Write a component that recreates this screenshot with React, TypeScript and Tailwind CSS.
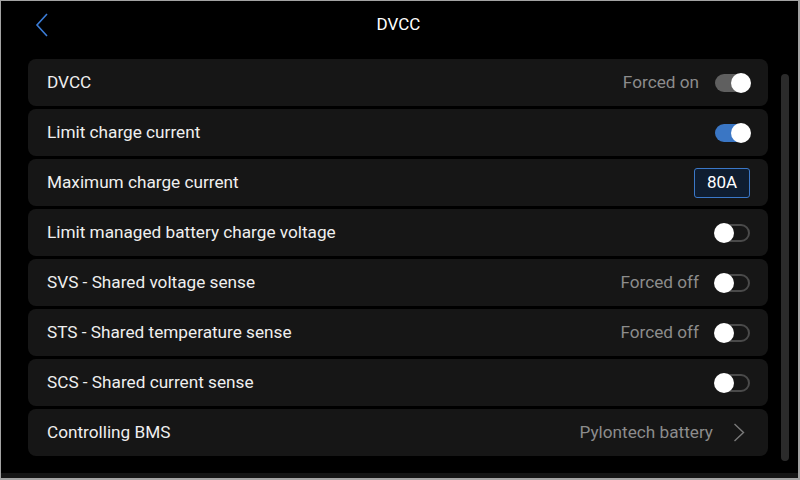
import React from 'react';

type Row = {
  label: string;
  note?: string;
  kind: 'toggle' | 'value' | 'link';
  state?: 'on' | 'off' | 'forced';
  value?: string;
};

const rows: Row[] = [
  { label: 'DVCC', note: 'Forced on', kind: 'toggle', state: 'forced' },
  { label: 'Limit charge current', kind: 'toggle', state: 'on' },
  { label: 'Maximum charge current', kind: 'value', value: '80A' },
  { label: 'Limit managed battery charge voltage', kind: 'toggle', state: 'off' },
  { label: 'SVS - Shared voltage sense', note: 'Forced off', kind: 'toggle', state: 'off' },
  { label: 'STS - Shared temperature sense', note: 'Forced off', kind: 'toggle', state: 'off' },
  { label: 'SCS - Shared current sense', kind: 'toggle', state: 'off' },
  { label: 'Controlling BMS', note: 'Pylontech battery', kind: 'link' },
];

function Toggle({ state }: { state: 'on' | 'off' | 'forced' }) {
  if (state === 'off') {
    return (
      <div className="relative w-[35px] h-[18px] rounded-full border-2 border-[#4a4a4a]">
        <div className="absolute -left-[3px] -top-[3px] w-[20px] h-[20px] rounded-full bg-white" />
      </div>
    );
  }
  const track = state === 'on' ? 'bg-[#3a76c4]' : 'bg-[#5f5f5f]';
  return (
    <div className={`relative w-[35px] h-[18px] rounded-full ${track}`}>
      <div className="absolute -right-px -top-px w-[20px] h-[20px] rounded-full bg-white" />
    </div>
  );
}

export default function App() {
  return (
    <div
      className="w-[800px] h-[480px] bg-[#a3a3a3] pt-px pl-px pr-[2px] pb-[2px] flex flex-col"
      style={{ fontFamily: 'Roboto, "Liberation Sans", sans-serif' }}
    >
      <div className="flex-1 bg-black flex flex-col">
        {/* Header */}
        <div className="h-[47px] flex items-center relative">
          <svg className="absolute left-[34px] top-[12px]" width="14" height="24" viewBox="0 0 14 24">
            <path d="M12 1 L2 12 L12 23" fill="none" stroke="#3b7dd8" strokeWidth="1.6" />
          </svg>
          <div className="flex-1 text-center text-white text-[17px] pt-px pr-[2px]">DVCC</div>
        </div>

        <div className="flex-1 flex pl-[27px]">
          {/* List */}
          <div className="w-[740px] flex flex-col gap-[3px] pt-[11px]">
            {rows.map(r => (
              <div
                key={r.label}
                className="h-[47px] rounded-[8px] bg-[#161616] flex items-center pl-[19px] pr-[18px]"
              >
                <div className="flex-1 text-[17.2px] text-[#efefef]">{r.label}</div>
                {r.note && (
                  <div className={`text-[17.2px] text-[#8c8c8c] ${r.kind === 'link' ? 'mr-[20px]' : 'mr-[16px]'}`}>
                    {r.note}
                  </div>
                )}
                {r.kind === 'toggle' && r.state && <Toggle state={r.state} />}
                {r.kind === 'value' && (
                  <div className="h-[30px] w-[56px] rounded-[3px] border-[1.5px] border-[#3b78c8] bg-[#0f1d30] flex items-center justify-center text-[17px] text-white">
                    {r.value}
                  </div>
                )}
                {r.kind === 'link' && (
                  <svg className="mr-[5px]" width="12" height="19" viewBox="0 0 12 19">
                    <path d="M1.5 1 L10.5 9.5 L1.5 18" fill="none" stroke="#7a7a7a" strokeWidth="1.4" />
                  </svg>
                )}
              </div>
            ))}
          </div>
          {/* Scrollbar */}
          <div className="ml-[13px] pt-[26px]">
            <div className="w-[8px] h-[387px] rounded-full bg-[#2b2b2b]" />
          </div>
        </div>
        <div className="h-[5px] bg-[#141414]" />
      </div>
    </div>
  );
}
